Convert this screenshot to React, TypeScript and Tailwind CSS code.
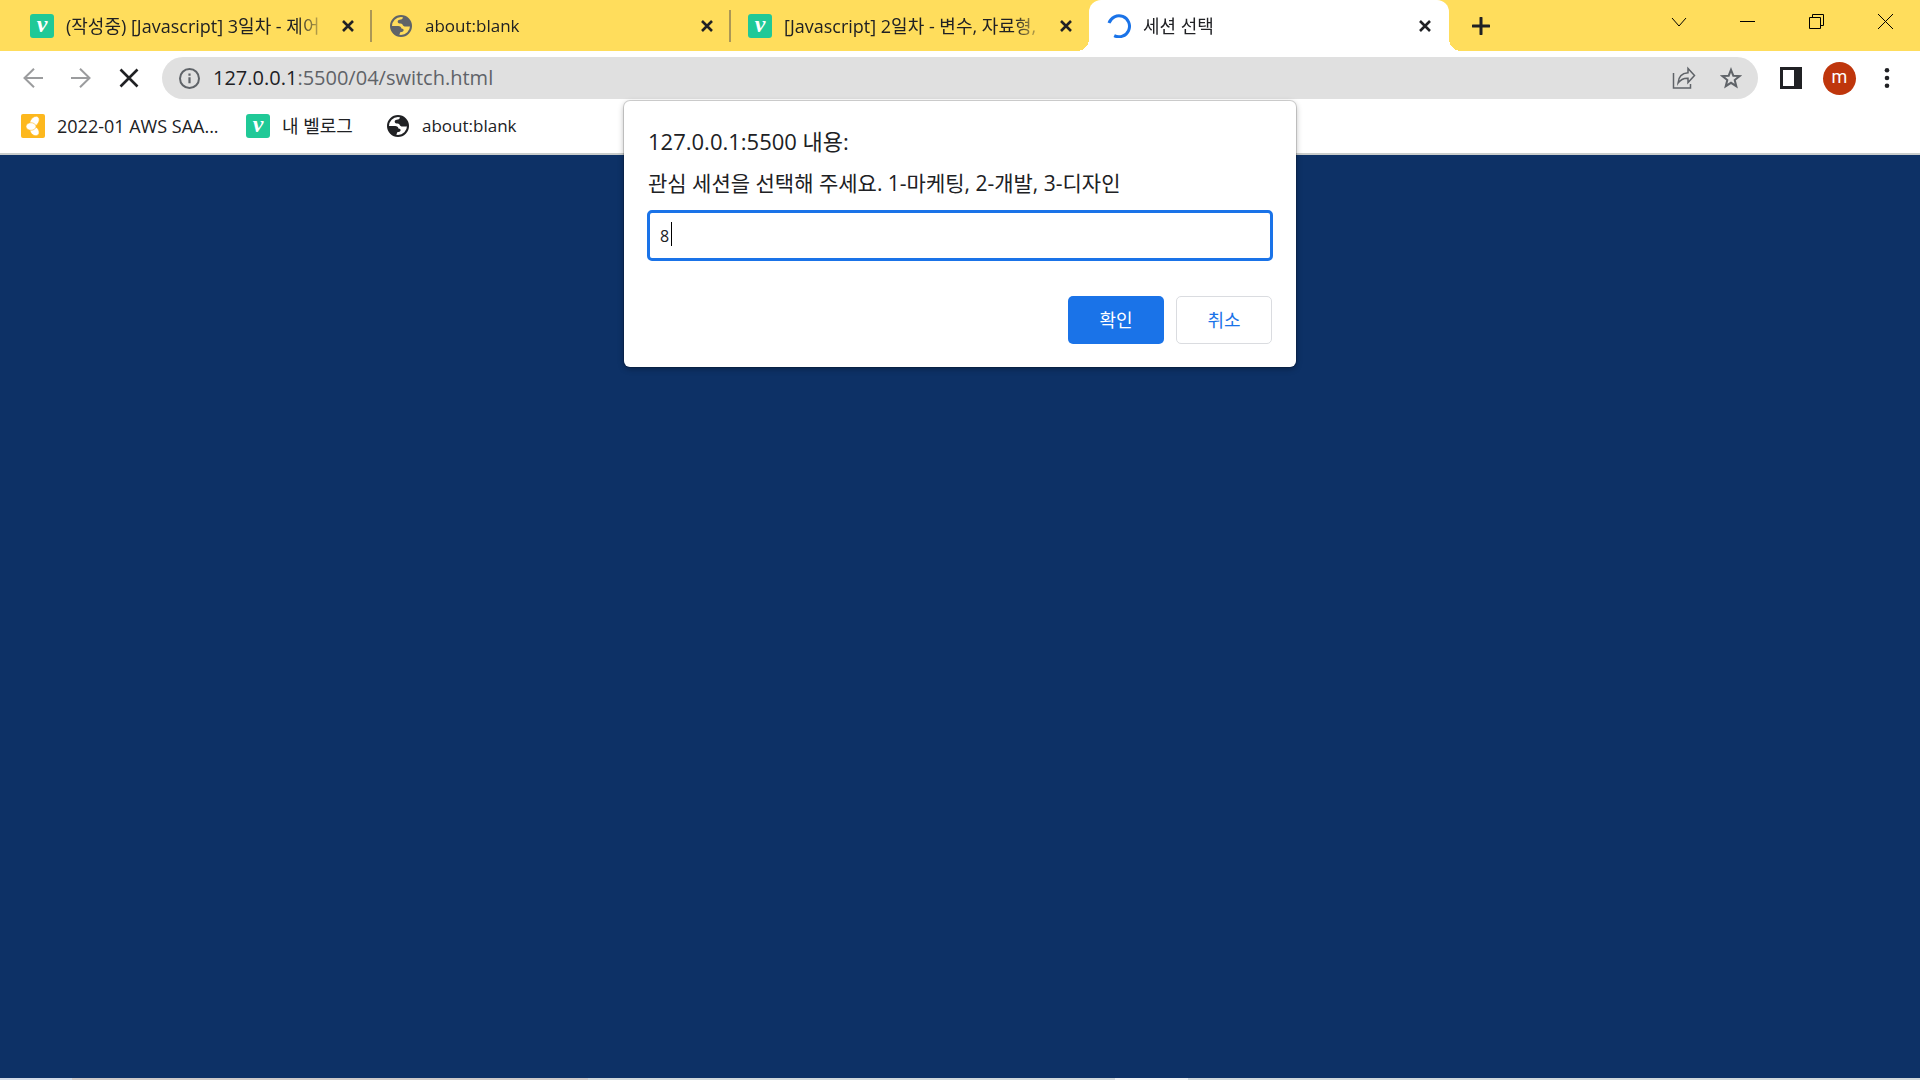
import { useState } from "react";
import type { ReactNode } from "react";

function VelogIcon() {
  return (
    <span className="flex size-6 shrink-0 items-center justify-center rounded-[3px] bg-[#20c997] font-['Liberation_Serif',serif] text-2xl leading-none font-bold text-white italic">
      <span className="pb-1">v</span>
    </span>
  );
}

function GlobeIcon({ color }: { color: string }) {
  return (
    <svg viewBox="0 0 22 22" className="mx-px size-[22px] shrink-0">
      <circle cx="11" cy="11" r="10" fill="none" stroke={color} strokeWidth="2" />
      <path
        fill={color}
        d="M13.2 1.5c-.2 1.7-.8 2.8-2.4 3.1-1.5.3-2.9.5-3.1 1.7-.2 1.1.6 2 1.9 2.1 1.3.1 2.5.1 3 1.3.4 1.1 1.4 1.8 3 1.8h5.7A11 11 0 0 0 13.2 1.5zM1 11h7.2c1.9 0 3.1 1 3.2 2.5 1.5 0 2.4.9 2.2 2.1-.3 1.4-1.7 1.6-3.4 1.7-.3 1.4-.8 2.6-2 3.9C4.200 20 1 16 1 11z"
      />
    </svg>
  );
}

function SpinnerIcon() {
  return (
    <svg viewBox="0 0 24 24" className="size-6 shrink-0">
      <path d="M2 9A10.500 10.500 0 1 1 7.200 21.600" fill="none" stroke="#1a73e8" strokeWidth="3" />
    </svg>
  );
}

function BootcampIcon() {
  return (
    <svg viewBox="0 0 24 24" className="size-6 shrink-0">
      <rect width="24" height="24" rx="2" fill="#fdb81e" />
      <g fill="#fff" stroke="#fdb81e" strokeWidth="0.6">
        <ellipse cx="13.500" cy="17" rx="5.300" ry="4" transform="rotate(48 13.500 17)" />
        <ellipse cx="13.500" cy="7.500" rx="5.800" ry="4" transform="rotate(-52 13.500 7.500)" />
        <ellipse cx="10" cy="12.500" rx="5" ry="3.800" />
      </g>
    </svg>
  );
}

function CloseIcon() {
  return (
    <svg viewBox="0 0 12 12" className="size-3">
      <path d="M1 1l10 10M11 1L1 11" stroke="#202124" strokeWidth="2.600" />
    </svg>
  );
}

interface TabProps {
  icon: ReactNode;
  title: string;
  active?: boolean;
  divider?: boolean;
  latin?: boolean;
}

function Tab({ icon, title, active, divider, latin }: TabProps) {
  return (
    <div
      className={`relative -mr-px flex h-full w-[360px] shrink-0 items-center pl-[18px] ${
        active ? "rounded-t-xl bg-white" : ""
      }`}
    >
      {active && (
        <>
          <span className="absolute bottom-0 -left-3 size-3 bg-[radial-gradient(circle_at_0_0,#ffdd5c_12px,#fff_12px)]" />
          <span className="absolute -right-3 bottom-0 size-3 bg-[radial-gradient(circle_at_100%_0,#ffdd5c_12px,#fff_12px)]" />
        </>
      )}
      {icon}
      <span
        className={`ml-3 w-[262px] overflow-hidden mask-r-from-88% leading-6 whitespace-nowrap ${
          latin ? "text-[17px]" : "text-lg leading-6"
        }`}
      >
        {title}
      </span>
      <button type="button" aria-label="탭 닫기" className="ml-3.5">
        <CloseIcon />
      </button>
      {divider && <span className="absolute right-0 h-8 w-0.5 bg-[#ac9755]" />}
    </div>
  );
}

function WindowControls() {
  return (
    <div className="ml-auto flex h-[43px] text-black">
      <button type="button" aria-label="탭 검색" className="flex w-[69px] items-center justify-center">
        <svg viewBox="0 0 16 16" className="size-4" fill="none" stroke="currentColor">
          <path d="M1 4l7 8 7-8" />
        </svg>
      </button>
      <button type="button" aria-label="최소화" className="flex w-[69px] items-center justify-center">
        <svg viewBox="0 0 15 15" className="size-[15px]" fill="none" stroke="currentColor">
          <path d="M0 7.500h15" />
        </svg>
      </button>
      <button type="button" aria-label="이전 크기로 복원" className="flex w-[69px] items-center justify-center">
        <svg viewBox="0 0 15 15" className="size-[15px]" fill="none" stroke="currentColor">
          <path d="M.5 3.500h11v11H.5zM3.500 3.500v-3h11v11h-3" />
        </svg>
      </button>
      <button type="button" aria-label="닫기" className="flex w-[69px] items-center justify-center">
        <svg viewBox="0 0 15 15" className="size-[15px]" fill="none" stroke="currentColor">
          <path d="M0 0l15 15M15 0L0 15" />
        </svg>
      </button>
    </div>
  );
}

function TabStrip() {
  return (
    <div className="flex h-[51px] bg-[#ffdd5c] pl-3">
      <Tab icon={<VelogIcon />} title="(작성중) [Javascript] 3일차 - 제어" divider />
      <Tab icon={<GlobeIcon color="#5f6368" />} title="about:blank" divider latin />
      <Tab icon={<VelogIcon />} title="[Javascript] 2일차 - 변수, 자료형," />
      <Tab icon={<SpinnerIcon />} title="세션 선택" active />
      <button type="button" aria-label="새 탭" className="ml-6 flex items-center">
        <svg viewBox="0 0 18 18" className="size-[18px]">
          <path d="M9 1v16M1 9h16" stroke="#202124" strokeWidth="3" strokeLinecap="round" />
        </svg>
      </button>
      <WindowControls />
    </div>
  );
}

function Toolbar() {
  return (
    <div className="flex h-[54px] items-center pr-[30px] pl-[23px]">
      <button type="button" aria-label="뒤로">
        <svg viewBox="0 0 20 20" className="size-5" fill="none" stroke="#9b9c9e" strokeWidth="2">
          <path d="M20 10H1.500M11 .8L1.500 10l9.500 9.200" />
        </svg>
      </button>
      <button type="button" aria-label="앞으로" className="ml-7">
        <svg viewBox="0 0 20 20" className="size-5" fill="none" stroke="#9b9c9e" strokeWidth="2">
          <path d="M0 10h18.500M9 .8l9.500 9.200L9 19.200" />
        </svg>
      </button>
      <button type="button" aria-label="로드 중지" className="ml-7">
        <svg viewBox="0 0 20 20" className="size-5" fill="none" stroke="#202124" strokeWidth="2.600">
          <path d="M1.500 1.500l17 17M18.500 1.500l-17 17" />
        </svg>
      </button>

      <div className="ml-[23px] flex h-[42px] flex-1 items-center rounded-full bg-[#e0e0e0] pr-4 pl-[17px]">
        <button type="button" aria-label="사이트 정보">
          <svg viewBox="0 0 21 21" className="size-[21px]">
            <circle cx="10.500" cy="10.500" r="9.500" fill="none" stroke="#5f6368" strokeWidth="2" />
            <path d="M9.400 9.300h2.200v6H9.400zM9.400 5.500h2.200v2.200H9.400z" fill="#5f6368" />
          </svg>
        </button>
        <div role="textbox" aria-label="주소창" className="ml-[13px] flex-1 text-xl leading-7 text-[#5f6368]">
          <span className="text-[#202124]">127.0.0.1</span>:5500/04/switch.html
        </div>
        <button type="button" aria-label="공유">
          <svg viewBox="0 0 24 24" className="size-6" fill="none" stroke="#5f6368" strokeWidth="1.500">
            <path d="M1.500 7v15h17v-4" />
            <path d="M6 17.200c.4-6 4-10 10-10.400V2.500l6.500 7-6.500 7v-4.300c-4.600-.2-7.500 1.300-10 5z" />
          </svg>
        </button>
        <button type="button" aria-label="북마크 추가" className="ml-6">
          <svg viewBox="0 0 22 22" className="size-[22px]" fill="none" stroke="#5f6368" strokeWidth="2">
            <path d="M11 2.800l2.300 5.900 6.300.4-4.900 4 1.600 6.100-5.300-3.400-5.300 3.400 1.600-6.100-4.900-4 6.300-.4z" />
          </svg>
        </button>
      </div>

      <button type="button" aria-label="측면 패널" className="ml-[22px]">
        <svg viewBox="0 0 22 22" className="size-[22px]">
          <path fillRule="evenodd" fill="#202124" d="M0 0h22v22H0zM3 3v16h11V3z" />
        </svg>
      </button>
      <button
        type="button"
        aria-label="프로필"
        className="ml-[21px] flex size-[33px] items-center justify-center rounded-full bg-[#bf360c] font-[Roboto,sans-serif] text-lg leading-none text-white"
      >
        <span className="pb-0.5">m</span>
      </button>
      <button type="button" aria-label="메뉴" className="ml-7">
        <svg viewBox="0 0 6 22" className="h-[22px] w-1.5" fill="#202124">
          <circle cx="3" cy="3.300" r="2.300" />
          <circle cx="3" cy="11" r="2.300" />
          <circle cx="3" cy="18.700" r="2.300" />
        </svg>
      </button>
    </div>
  );
}

function BookmarksBar() {
  return (
    <nav className="flex h-[50px] items-center border-b-2 border-[#cacdcc] pb-1.5 pl-[21px] text-lg leading-6">
      <a href="#aws" className="flex w-[225px] items-center gap-3">
        <BootcampIcon />
        2022-01 AWS SAA...
      </a>
      <a href="#velog" className="flex w-[140px] items-center gap-3">
        <VelogIcon />내 벨로그
      </a>
      <a href="#blank" className="flex items-center gap-3 text-[17px]">
        <GlobeIcon color="#202124" />
        about:blank
      </a>
    </nav>
  );
}

function PromptDialog() {
  const [value, setValue] = useState("8");

  return (
    <form
      role="dialog"
      aria-labelledby="prompt-title"
      onSubmit={(e) => e.preventDefault()}
      className="absolute top-[101px] left-1/2 w-[672px] -translate-x-1/2 rounded-md bg-white px-6 pt-6 pb-[23px] shadow-[0_0_0_1px_rgba(0,0,0,0.15),0_2px_6px_rgba(0,0,0,0.3)]"
    >
      <h1 id="prompt-title" className="text-[22px] leading-8">
        127.0.0.1:5500 내용:
      </h1>
      <label htmlFor="prompt-input" className="mt-3 block text-[21px] leading-7">
        관심 세션을 선택해 주세요. 1-마케팅, 2-개발, 3-디자인
      </label>
      <div className="relative mt-[13px] -mx-px">
        <input
          id="prompt-input"
          value={value}
          onChange={(e) => setValue(e.target.value)}
          className="block h-[51px] w-full rounded-[5px] border-3 border-[#1a73e8] px-2.5 text-base caret-transparent outline-none"
        />
        <span className="absolute top-3 left-6 h-6 w-px bg-black" />
      </div>
      <div className="mt-[35px] flex justify-end gap-3 text-lg">
        <button type="submit" className="h-12 w-24 rounded-[5px] bg-[#1a73e8] text-white">
          확인
        </button>
        <button type="button" className="h-12 w-24 rounded-[5px] border border-[#dadce0] text-[#1a73e8]">
          취소
        </button>
      </div>
    </form>
  );
}

export default function App() {
  return (
    <div className="relative flex min-h-screen flex-col bg-white font-['Open_Sans','Noto_Sans_CJK_KR',sans-serif] text-[#202124]">
      <TabStrip />
      <Toolbar />
      <BookmarksBar />
      <main className="flex-1 bg-[#0d3166]" />
      <div className="flex h-0.5 bg-[#d2d9dc]">
        <span className="w-[72px] bg-[#d3dce8]" />
        <span className="w-[516px] bg-[#d0cbc9]" />
        <span className="ml-[527px] w-[73px] bg-[#f1f3f4]" />
      </div>
      <PromptDialog />
    </div>
  );
}
